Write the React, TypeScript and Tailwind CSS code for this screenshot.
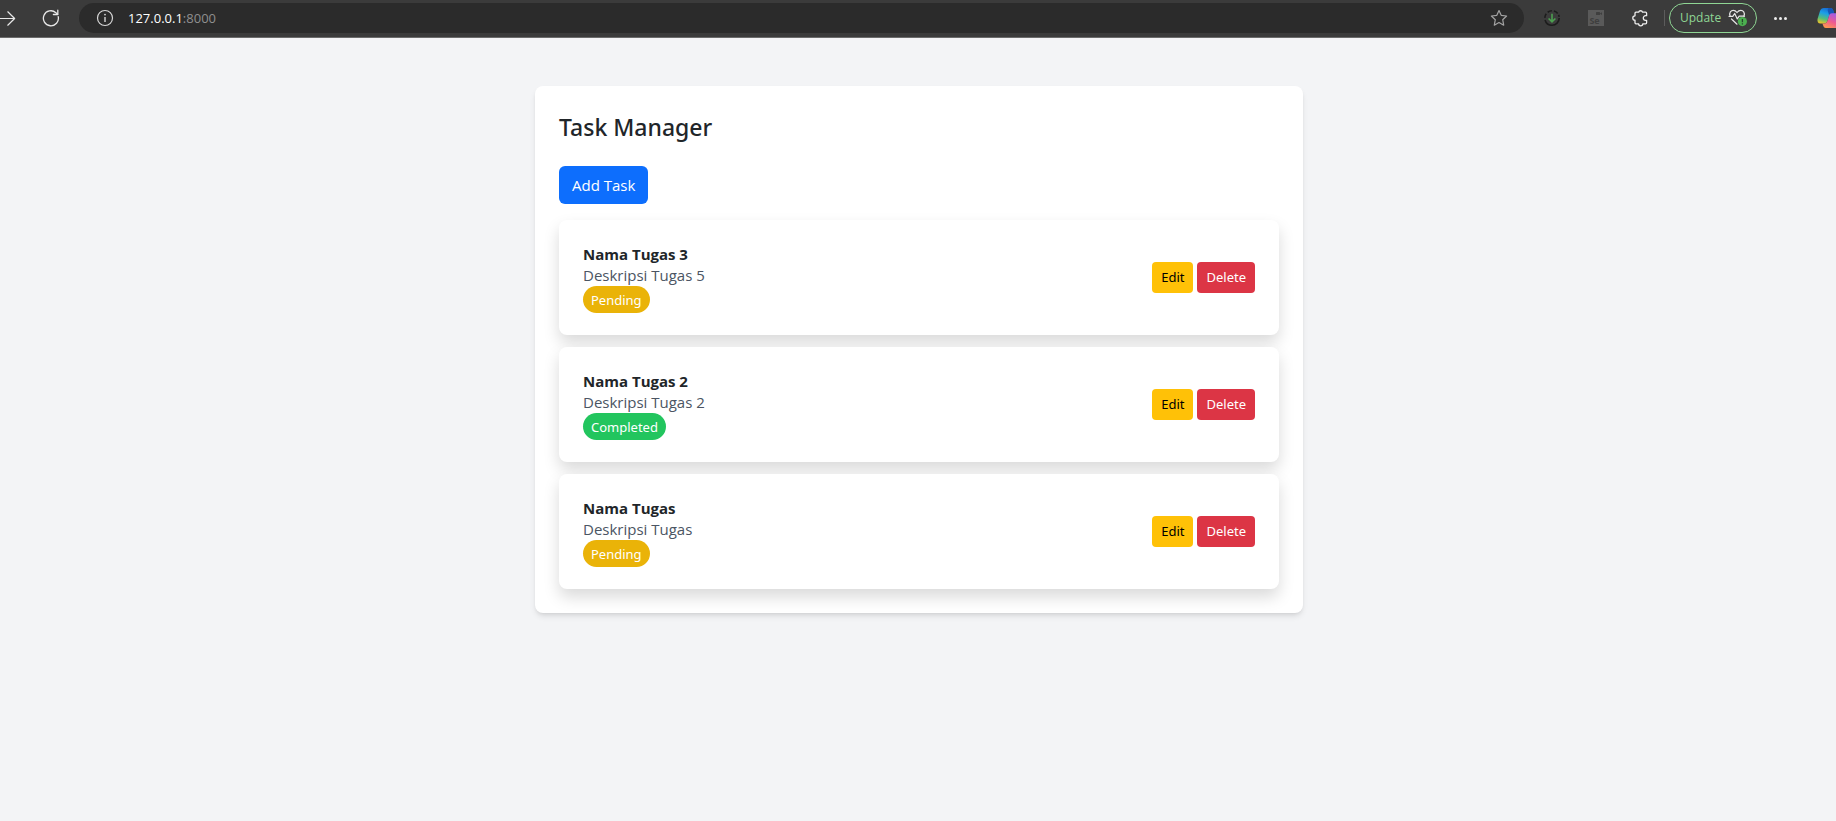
import React from "react";

type Status = "Pending" | "Completed";

interface Task {
  name: string;
  description: string;
  status: Status;
}

const tasks: Task[] = [
  { name: "Nama Tugas 3", description: "Deskripsi Tugas 5", status: "Pending" },
  { name: "Nama Tugas 2", description: "Deskripsi Tugas 2", status: "Completed" },
  { name: "Nama Tugas", description: "Deskripsi Tugas", status: "Pending" },
];

const statusColors: Record<Status, string> = {
  Pending: "bg-[#eab308]",
  Completed: "bg-[#22c55e]",
};

function ForwardIcon() {
  return (
    <svg width="16" height="18" viewBox="0 0 16 18" fill="none" stroke="#e8e8e8" strokeWidth="1.2" strokeLinecap="round" strokeLinejoin="round">
      <path d="M0 9.5H14.5M7.8 2.8L14.6 9.5L7.8 16.2" />
    </svg>
  );
}

function ReloadIcon() {
  return (
    <svg width="18" height="18" viewBox="0 0 18 18" fill="none" stroke="#e8e8e8" strokeWidth="1.3" strokeLinecap="round" strokeLinejoin="round">
      <path d="M16.2 7.6A7.5 7.5 0 1 1 13.9 3.7L15.6 5.3" />
      <path d="M15.8 1.2V5.5H11.4" />
    </svg>
  );
}

function InfoIcon() {
  return (
    <svg width="18" height="18" viewBox="0 0 18 18" fill="none" stroke="#d6d6d6">
      <circle cx="9" cy="9" r="7.5" strokeWidth="1.2" />
      <path d="M9 8V13" strokeWidth="1.4" />
      <circle cx="9" cy="5.6" r="0.9" fill="#d6d6d6" stroke="none" />
    </svg>
  );
}

function StarIcon() {
  return (
    <svg width="18" height="18" viewBox="0 0 18 18" fill="none" stroke="#a3a3a3" strokeWidth="1.2" strokeLinejoin="round">
      <path d="M9 1.6L11.2 6.3L16.6 7L12.7 10.7L13.7 16.2L9 13.5L4.3 16.2L5.3 10.7L1.4 7L6.8 6.3Z" />
    </svg>
  );
}

function DownloaderIcon() {
  return (
    <svg width="18" height="18" viewBox="0 0 18 18" fill="none">
      <circle cx="9" cy="9" r="7.2" stroke="#1c1c1c" strokeWidth="1.6" strokeDasharray="20.5 2.1 4.5 2 4.5 2.1 4.5 1.6 2 1.4" />
      <path d="M9 4.8V12.8M5.6 9.5L9 12.9L12.4 9.5" stroke="#4c9f50" strokeWidth="1.6" />
    </svg>
  );
}

function RecorderIcon() {
  return (
    <svg width="16" height="16" viewBox="0 0 16 16">
      <rect width="16" height="16" fill="#5a5a5a" />
      <rect x="8" y="2" width="4" height="3" rx="0.5" fill="#3f3f3f" />
      <path d="M12 3.4L14 2.2V4.9L12 3.8Z" fill="#3f3f3f" />
      <text x="1.4" y="14" fontSize="9" fontWeight="700" fontFamily="Open Sans, sans-serif" fill="#3f3f3f">Se</text>
    </svg>
  );
}

function PuzzleIcon() {
  return (
    <svg width="18" height="18" viewBox="0 0 18 18" fill="none" stroke="#ededed" strokeWidth="1.3" strokeLinejoin="round">
      <path d="M5 3.2H7.6A2.1 2.1 0 0 1 11.6 3.2H14.6Q15.6 3.2 15.6 4.2V6.7H14.6A2.3 2.3 0 0 0 14.6 11.3H15.6V13.8Q15.6 14.8 14.6 14.8H11.8A2.1 2.1 0 0 1 7.6 14.8H5Q4 14.8 4 13.8V11.2A2.2 2.2 0 0 1 4 6.8V4.2Q4 3.2 5 3.2Z" />
    </svg>
  );
}

function HealthIcon() {
  return (
    <svg width="20" height="18" viewBox="0 0 20 18" fill="none">
      <g stroke="#e6e6e6" strokeWidth="1.2" strokeLinecap="round" strokeLinejoin="round">
        <path d="M2.2 7.3C0.6 3.6 3.2 1.4 5.3 1.4C7.2 1.4 8.2 2.5 9 3.5C9.8 2.5 10.9 1.4 12.8 1.4C15 1.4 17.4 3.6 15.9 7.2" />
        <path d="M1 7.3H4.8L6.7 4.5L9.3 9.9L11.2 7.2H16.5" />
        <path d="M3.5 10L9 15.2" />
      </g>
      <circle cx="14.4" cy="12.6" r="4.6" fill="#4caf50" />
      <path d="M14.4 10V13.2M14.4 14.3V15.4" stroke="#26472a" strokeWidth="1.3" />
    </svg>
  );
}

function CopilotIcon() {
  return (
    <svg width="19" height="20" viewBox="0 0 19 20">
      <defs>
        <linearGradient id="coolRibbon" x1="0.6" y1="0" x2="0.3" y2="1">
          <stop offset="0" stopColor="#1769d2" />
          <stop offset="0.35" stopColor="#1b9fe8" />
          <stop offset="0.7" stopColor="#56bd79" />
          <stop offset="1" stopColor="#e8c62b" />
        </linearGradient>
        <linearGradient id="warmRibbon" x1="0.7" y1="0" x2="0.3" y2="1">
          <stop offset="0" stopColor="#a65de0" />
          <stop offset="0.5" stopColor="#ef5a91" />
          <stop offset="1" stopColor="#ff9a4d" />
        </linearGradient>
      </defs>
      <path d="M7 0H13.5C15.2 0 15.8 1 16.3 2.5L17.2 5.5H15C13 5.5 12.5 6.5 12 8L10.5 12.8C10 14.3 9 15.6 7.5 15.6H3.5C1 15.6 0 13.4 0.6 10.8L3 3C3.7 1 5 0 7 0Z" fill="url(#coolRibbon)" />
      <path d="M11.5 0H13.5C15.2 0 15.8 1 16.3 2.5L17.2 5.5H15C13.4 5.5 12.7 6.2 12.2 7.4L10.6 2Z" fill="#1457b8" />
      <path d="M15 5.2H19V20H9C7.2 20 6.6 18.8 6 17L5.4 15.6H7.5C9.2 15.6 10 14.4 10.5 12.8L12.2 7.3C12.7 5.9 13.6 5.2 15 5.2Z" fill="url(#warmRibbon)" />
    </svg>
  );
}

function BrowserBar() {
  return (
    <header className="flex h-[38px] items-center overflow-hidden border-b border-[#6b6b6b] bg-[#3b3b3b] pb-[3px] pt-[2px]">
      <button type="button" aria-label="Forward" className="shrink-0">
        <ForwardIcon />
      </button>
      <button type="button" aria-label="Reload" className="ml-[26px] shrink-0">
        <ReloadIcon />
      </button>
      <div className="ml-[19px] flex h-[30px] min-w-0 flex-1 items-center rounded-full bg-[#2b2b2b] pl-[17px] pr-4">
        <button type="button" aria-label="Site information" className="shrink-0">
          <InfoIcon />
        </button>
        <a href="#" className="ml-[14px] text-[13px] leading-5 text-[#8f8f8f]">
          <span className="text-white">127.0.0.1</span>:8000
        </a>
        <button type="button" aria-label="Add to favorites" className="ml-auto shrink-0">
          <StarIcon />
        </button>
      </div>
      <button type="button" aria-label="Downloader" className="ml-[19px] shrink-0">
        <DownloaderIcon />
      </button>
      <button type="button" aria-label="Recorder" className="ml-[27px] shrink-0">
        <RecorderIcon />
      </button>
      <button type="button" aria-label="Extensions" className="ml-[27px] shrink-0">
        <PuzzleIcon />
      </button>
      <div className="ml-[15px] h-4 w-px shrink-0 bg-[#5c5c5c]" />
      <button
        type="button"
        className="ml-1 flex h-[30px] w-[88px] shrink-0 items-center justify-between rounded-full border border-[#8fd694] pl-[10px] pr-2 text-[12px] leading-4 text-[#8fd694]"
      >
        Update
        <HealthIcon />
      </button>
      <button type="button" aria-label="Settings and more" className="ml-[17px] flex shrink-0 gap-[2px]">
        <span className="size-[3px] rounded-full bg-[#ededed]" />
        <span className="size-[3px] rounded-full bg-[#ededed]" />
        <span className="size-[3px] rounded-full bg-[#ededed]" />
      </button>
      <button type="button" aria-label="Copilot" className="ml-[30px] shrink-0">
        <CopilotIcon />
      </button>
    </header>
  );
}

function TaskCard({ task }: { task: Task }) {
  return (
    <li className="flex items-center justify-between rounded-lg bg-white p-6 shadow-[0_8px_16px_rgba(0,0,0,0.15)]">
      <div>
        <h2 className="text-[15px] font-bold leading-5">{task.name}</h2>
        <p className="text-[15px] leading-[22px] text-[#4b5563]">{task.description}</p>
        <span
          className={`-mb-[2px] block w-fit rounded-full px-2 pb-[3px] pt-1 font-['Noto_Sans',sans-serif] text-[13px] leading-5 text-white ${statusColors[task.status]}`}
        >
          {task.status}
        </span>
      </div>
      <div className="flex gap-1 font-['Noto_Sans',sans-serif] text-[13px] leading-[21px]">
        <button type="button" className="rounded-sm bg-[#ffc107] px-[9px] py-[5px] text-black">
          Edit
        </button>
        <button type="button" className="rounded-sm bg-[#dc3545] px-[9px] py-[5px] text-white">
          Delete
        </button>
      </div>
    </li>
  );
}

export default function App() {
  return (
    <div className="min-h-screen bg-[#f3f4f6] font-['Open_Sans','Noto_Sans',sans-serif] text-[#212529]">
      <BrowserBar />
      <div className="pl-[2px] pt-12">
        <main className="mx-auto max-w-3xl rounded-lg bg-white p-6 shadow-md">
          <h1 className="mb-[22px] font-['Noto_Sans',sans-serif] text-[23px] font-medium leading-[34px]">Task Manager</h1>
          <button type="button" className="mb-4 block rounded-md bg-[#0d6efd] px-[13px] py-[7px] text-[15px] leading-6 text-white">
            Add Task
          </button>
          <ul className="flex flex-col gap-3">
            {tasks.map((task) => (
              <TaskCard key={task.name} task={task} />
            ))}
          </ul>
        </main>
      </div>
    </div>
  );
}
